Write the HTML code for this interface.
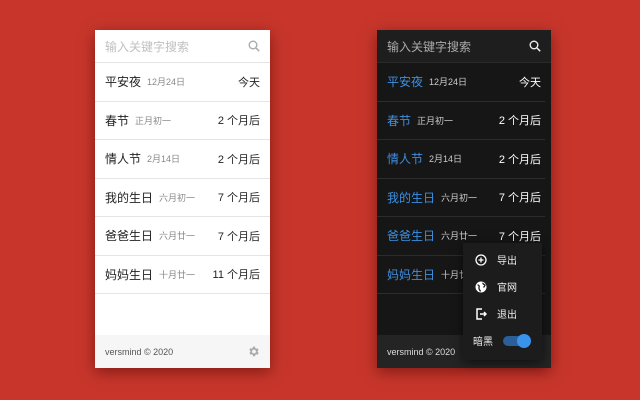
<!DOCTYPE html><html><head><meta charset="utf-8"><style>
*{margin:0;padding:0;box-sizing:border-box}
body{width:640px;height:400px;background:#c8362b;font-family:"Liberation Sans","Noto Sans CJK SC",sans-serif;position:relative;overflow:hidden}
.p{position:absolute;top:30px;width:175px;height:338px;box-shadow:0 4px 14px rgba(60,0,0,.5)}
.w{left:95px;background:#fff}
.d{left:377px;width:174px;background:#161616}
.s{height:33px;display:flex;align-items:center;padding:0 10px;font-size:12px;justify-content:space-between}
.w .s{color:#c0c0c0;border-bottom:1px solid #e4e4e4}
.d .s{color:#aaa;background:#1e1e1e;border-bottom:1px solid #2a2a2a}
.r{height:38.5px;display:flex;align-items:center;padding:0 10px;font-size:12px;border-bottom:1px solid #e4e4e4}
.d .r{border-bottom:1px solid #2c2c2c;color:#fff;margin:0 6px 0 0;padding-right:4px}
.w .r{color:#222}
.r small{font-size:9px;margin-left:6px;color:#888}
.d .r small{color:#ccc}
.d .r b{color:#3d8fe0;font-weight:normal}
.r i{margin-left:auto;font-style:normal;font-size:11px}
.f{position:absolute;bottom:0;left:0;right:0;height:33px;display:flex;align-items:center;justify-content:space-between;padding:0 10px;font-size:9px}
.w .f{background:#f6f6f6;color:#555}
.d .f{background:#242424;color:#ddd}
.m{position:absolute;left:463px;top:243px;width:79px;height:117px;background:#1c1c1c;box-shadow:0 2px 10px rgba(0,0,0,.6);color:#eee;font-size:10px;padding-top:3px}
.m div{height:27px;display:flex;align-items:center;padding-left:12px}
.m svg{margin-right:10px}
</style></head><body>
<div class="p w">
<div class="s"><span>输入关键字搜索</span><svg width="12" height="12" viewBox="0 0 12 12"><circle cx="5" cy="5" r="3.8" stroke="#aaa" stroke-width="1.4" fill="none"/><path d="M8 8l3.2 3.2" stroke="#aaa" stroke-width="1.5"/></svg></div>
<div class="r">平安夜<small>12月24日</small><i>今天</i></div>
<div class="r">春节<small>正月初一</small><i>2 个月后</i></div>
<div class="r">情人节<small>2月14日</small><i>2 个月后</i></div>
<div class="r">我的生日<small>六月初一</small><i>7 个月后</i></div>
<div class="r">爸爸生日<small>六月廿一</small><i>7 个月后</i></div>
<div class="r">妈妈生日<small>十月廿一</small><i>11 个月后</i></div>
<div class="f"><span>versmind © 2020</span><svg width="13" height="13" viewBox="0 0 24 24"><path fill="#aaa" d="M19.4 13a7 7 0 000-2l2.1-1.6-2-3.5-2.5 1a7 7 0 00-1.7-1L14.9 3h-4l-.4 2.7a7 7 0 00-1.7 1l-2.5-1-2 3.5L6.5 11a7 7 0 000 2l-2.1 1.6 2 3.5 2.5-1a7 7 0 001.7 1l.4 2.7h4l.4-2.7a7 7 0 001.7-1l2.5 1 2-3.5zM12.9 15.5a3.5 3.5 0 110-7 3.5 3.5 0 010 7z"/></svg></div>
</div>
<div class="p d">
<div class="s"><span>输入关键字搜索</span><svg width="12" height="12" viewBox="0 0 12 12"><circle cx="5" cy="5" r="3.8" stroke="#eee" stroke-width="1.4" fill="none"/><path d="M8 8l3.2 3.2" stroke="#eee" stroke-width="1.5"/></svg></div>
<div class="r"><b>平安夜</b><small>12月24日</small><i>今天</i></div>
<div class="r"><b>春节</b><small>正月初一</small><i>2 个月后</i></div>
<div class="r"><b>情人节</b><small>2月14日</small><i>2 个月后</i></div>
<div class="r"><b>我的生日</b><small>六月初一</small><i>7 个月后</i></div>
<div class="r"><b>爸爸生日</b><small>六月廿一</small><i>7 个月后</i></div>
<div class="r"><b>妈妈生日</b><small>十月廿一</small><i>11 个月后</i></div>
<div class="f"><span>versmind © 2020</span></div>
</div>
<div class="m">
<div><svg width="12" height="12" viewBox="0 0 12 12"><circle cx="6" cy="6" r="5" stroke="#fff" stroke-width="1.3" fill="none"/><path d="M6 3.5v5M3.5 6h5" stroke="#fff" stroke-width="1.3"/></svg>导出</div>
<div><svg width="12" height="12" viewBox="0 0 12 12"><circle cx="6" cy="6" r="5.5" fill="#fff"/><path d="M2.5 4c1.5 0 2 1 1.5 2.5S5 9 5.5 10.5M8 1.8c-.5 1.2 1 1.7 2 2.2 0 1.5-1 1.5-1.5 2.5" stroke="#1c1c1c" stroke-width="1.3" fill="none"/></svg>官网</div>
<div><svg width="12" height="12" viewBox="0 0 12 12"><path d="M7 1H2v10h5M5 6h6M9 4l2 2-2 2" stroke="#fff" stroke-width="1.5" fill="none"/></svg>退出</div>
<div style="padding-left:10px">暗黑<span style="margin-left:10px;position:relative;width:26px;height:10px;background:#2a5f9a;border-radius:5px;display:inline-block"><span style="position:absolute;right:-2px;top:-2px;width:14px;height:14px;border-radius:7px;background:#3a93ea"></span></span></div>
</div>
</body></html>
